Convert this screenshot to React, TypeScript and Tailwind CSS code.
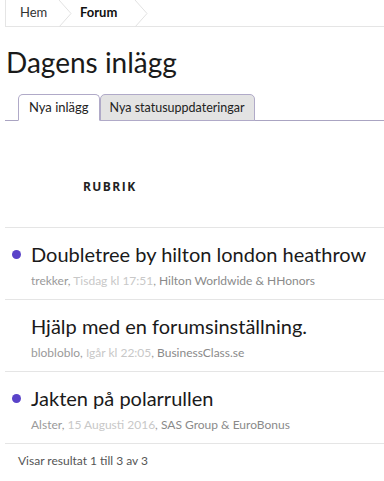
import React from 'react';

const posts = [
  {
    title: 'Doubletree by hilton london heathrow',
    author: 'trekker',
    date: 'Tisdag kl 17:51',
    forum: 'Hilton Worldwide & HHonors',
    unread: true,
  },
  {
    title: 'Hjälp med en forumsinställning.',
    author: 'blobloblo',
    date: 'Igår kl 22:05',
    forum: 'BusinessClass.se',
    unread: false,
  },
  {
    title: 'Jakten på polarrullen',
    author: 'Alster',
    date: '15 Augusti 2016',
    forum: 'SAS Group & EuroBonus',
    unread: true,
  },
];

const Chevron = () => (
  <svg width="14" height="27" viewBox="0 0 14 27" className="shrink-0">
    <path d="M1 0 L13 13.5 L1 27" fill="none" stroke="#e2e2e2" strokeWidth="1" />
  </svg>
);

export default function App() {
  return (
    <div className="bg-white min-h-[481px] font-['Lato',sans-serif] text-[#1a1a1a]">
      {/* Breadcrumb */}
      <div className="ml-[5px] flex h-[27px] items-center border-b border-l border-[#e5e5e5] pl-[14px]">
        <div className="w-[38px] text-[13px] text-[#333]">Hem</div>
        <Chevron />
        <div className="w-[62px] pl-[8px] text-[13px] font-bold text-[#111]">Forum</div>
        <Chevron />
      </div>

      {/* Title */}
      <h1 className="mt-[18px] pl-[6px] text-[28px] leading-[34px] text-[#1a1a1a]">Dagens inlägg</h1>

      {/* Tabs */}
      <div className="mt-[15px] ml-[5px] flex items-end border-b border-[#aaa4c2] pl-[13px]">
        <div className="-mb-px rounded-t-[5px] border border-b-white border-[#b0aac8] bg-white px-[10px] py-[3px] text-[13px] leading-[19px] text-[#222]">
          Nya inlägg
        </div>
        <div className="-mb-px rounded-t-[5px] border border-[#b0aac8] bg-[#e3e3e3] px-[9px] py-[3px] text-[12.5px] leading-[19px] text-[#222]">
          Nya statusuppdateringar
        </div>
      </div>

      {/* Column header */}
      <div className="ml-[5px] h-[107px] border-b border-[#e5e5e5] pl-[78px] pt-[58px]">
        <span className="block font-['Open_Sans',sans-serif] text-[12px] font-bold leading-[16px] tracking-[0.12em] text-[#222]">RUBRIK</span>
      </div>

      {/* Posts */}
      {posts.map((p) => (
        <div key={p.title} className="ml-[5px] h-[72px] border-b border-[#e5e5e5] pt-[12px]">
          <div className="flex items-center">
            <span className="flex w-[26px] shrink-0 justify-start pl-[7px]">
              {p.unread && <span className="block h-[9px] w-[9px] rounded-full bg-[#5a43c9]" />}
            </span>
            <span className="text-[20px] leading-[28px] text-[#1a1a1a]">{p.title}</span>
          </div>
          <div className="mt-[5px] pl-[26px] text-[12px] leading-[16px] text-[#9a9a9a]">
            {p.author}, <span className="text-[#c8c8c8]">{p.date}</span>, <span className="text-[#8a8a8a]">{p.forum}</span>
          </div>
        </div>
      ))}

      <div className="pl-[18px] pt-[8px] text-[12px] text-[#555]">Visar resultat 1 till 3 av 3</div>
    </div>
  );
}
